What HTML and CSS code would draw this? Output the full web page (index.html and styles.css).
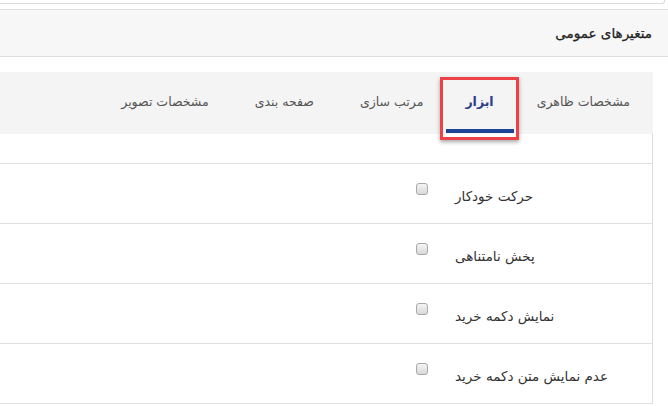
FILE: index.html
```html
<!DOCTYPE html>
<html lang="fa" dir="rtl">
<head>
<meta charset="utf-8">
<title>متغیرهای عمومی</title>
<link rel="stylesheet" href="styles.css">
</head>
<body>
<div class="prev"></div>
<div class="panel-head"><h3 class="panel-title">متغیرهای عمومی</h3></div>
<div class="content">
  <ul class="tabs">
    <li class="tab">مشخصات ظاهری</li>
    <li class="tab active">ابزار<span class="underline"></span><span class="highlight"></span></li>
    <li class="tab">مرتب سازی</li>
    <li class="tab">صفحه بندی</li>
    <li class="tab">مشخصات تصویر</li>
  </ul>
  <div class="rows">
    <div class="spacer"></div>
    <div class="row"><label class="lbl">حرکت خودکار</label><span class="box"><input type="checkbox" class="chk"></span></div>
    <div class="row"><label class="lbl">پخش نامتناهی</label><span class="box"><input type="checkbox" class="chk"></span></div>
    <div class="row"><label class="lbl">نمایش دکمه خرید</label><span class="box"><input type="checkbox" class="chk"></span></div>
    <div class="row"><label class="lbl">عدم نمایش متن دکمه خرید</label><span class="box"><input type="checkbox" class="chk"></span></div>
  </div>
</div>
</body>
</html>
```
FILE: styles.css
```css
html, body {
  margin: 0;
  padding: 0;
  background: #fff;
}
body {
  direction: rtl;
  font-family: "DejaVu Sans", sans-serif;
  color: #333;
  overflow: hidden;
}
.prev {
  height: 3px;
  margin-left: 0;
  margin-right: 3px;
  border-bottom: 1px solid #dcdcdc;
  border-right: 1px solid #dcdcdc;
  border-bottom-right-radius: 3px;
}
.panel-head {
  margin-top: 5px;
  height: 46px;
  background: #f7f7f7;
  border-top: 1px solid #dedede;
  border-bottom: 1px solid #dedede;
  padding-right: 16px;
  display: flex;
  align-items: center;
}
.panel-title {
  margin: 0;
  font-size: 13.5px;
  font-weight: normal;
  color: #222;
  -webkit-text-stroke: 0.25px #222;
  padding-bottom: 1px;
}
.content {
  margin-top: 15px;
  margin-right: 15px;
}
.tabs {
  list-style: none;
  margin: 0;
  padding: 0;
  display: flex;
  height: 62px;
  background: #f4f4f4;
}
.tab {
  position: relative;
  padding: 0 23px 4px 23px;
  font-size: 12.5px;
  color: #555;
  display: flex;
  align-items: center;
}
.tab.active {
  color: #2d3e8c;
  font-weight: bold;
  padding: 0 20px 4px 19px;
}
.underline {
  position: absolute;
  left: 0;
  right: 0;
  bottom: 1px;
  height: 4px;
  background: #1c4596;
}
.highlight {
  position: absolute;
  left: -6px;
  right: -5px;
  top: 5px;
  bottom: -6px;
  border: 3px solid #ec4247;
  box-shadow: 0 2px 4px rgba(0, 0, 0, 0.35);
}
.rows {
  border-right: 1px solid #dcdcdc;
}
.spacer {
  height: 29px;
  border-bottom: 1px solid #e0e0e0;
}
.row {
  height: 59px;
  border-bottom: 1px solid #e0e0e0;
  display: flex;
  align-items: flex-start;
}
.lbl {
  width: 197px;
  text-align: left;
  font-size: 13.5px;
  color: #333;
  padding-top: 24px;
}
.box {
  margin-right: 27px;
  padding-top: 19px;
}
.chk {
  appearance: none;
  -webkit-appearance: none;
  display: block;
  width: 12px;
  height: 12px;
  margin: 0;
  border: 1px solid #a9a9a9;
  border-radius: 3px;
  background: linear-gradient(#f4f4f4, #d9d9d9);
  box-sizing: border-box;
}
```
